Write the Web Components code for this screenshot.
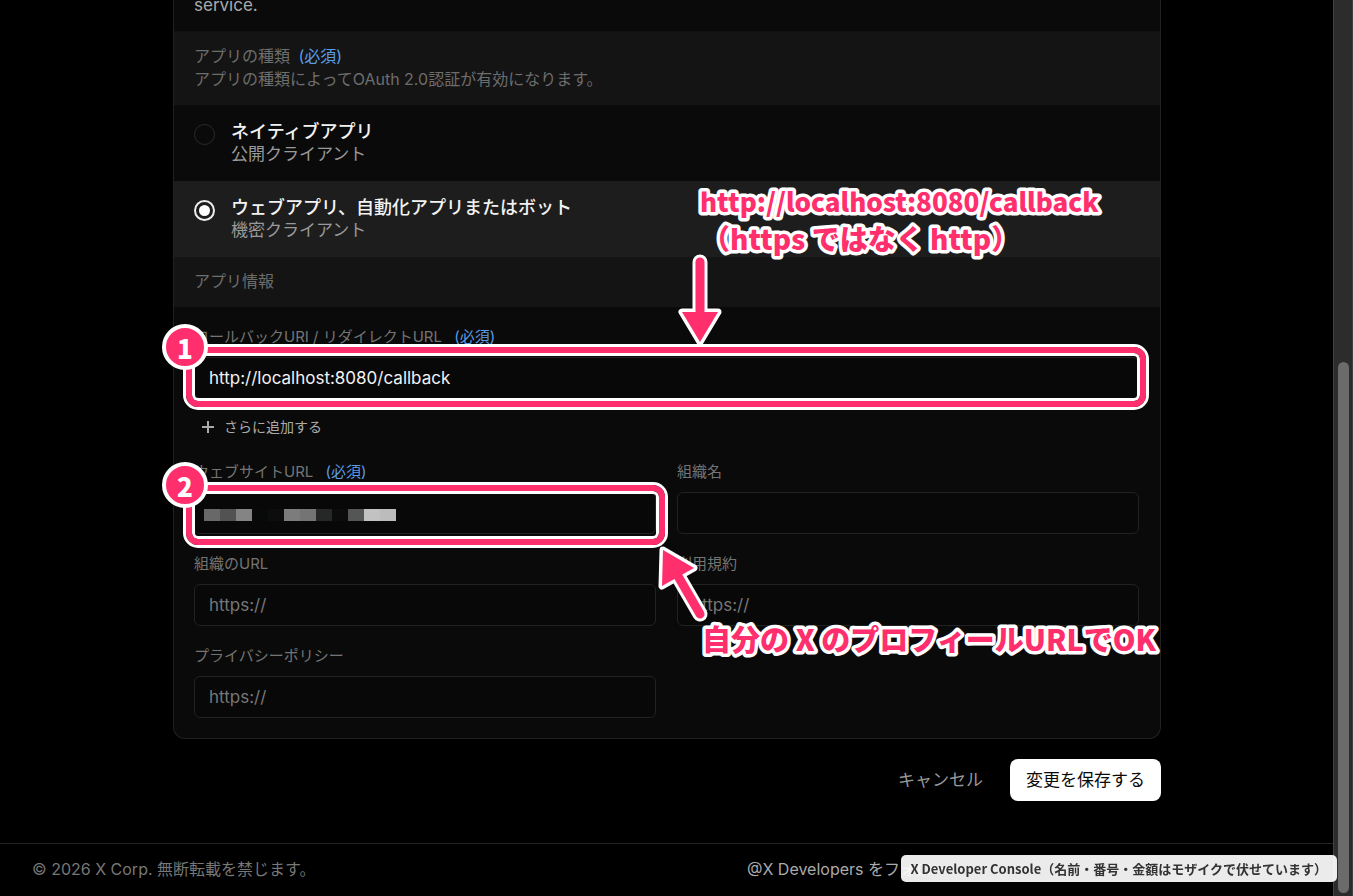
<!DOCTYPE html>
<html lang="ja">
<head>
<meta charset="utf-8">
<title>X Developer Console</title>
<style>
body { margin: 0; background: #000; }
</style>
</head>
<body>
<console-page></console-page>
<script>
const define = (name, html, setup) => {
  const tpl = document.createElement('template');
  tpl.innerHTML = html;
  customElements.define(name, class extends HTMLElement {
    constructor() {
      super();
      this.attachShadow({ mode: 'open' }).append(tpl.content.cloneNode(true));
    }
    connectedCallback() { if (setup) setup(this, this.shadowRoot); }
  });
};

/* Grey heading band inside the card */
define('section-band', `
<style>
:host { display: block; background: #141414; color: #6d6d6d; font-size: 16px; line-height: 23px; padding: 13px 20px 14px; }
</style>
<slot></slot>`);

define('required-mark', `
<style>
:host { color: #5c9ae2; margin-left: 8px; }
</style>
<slot></slot>`);

define('app-type-picker', `
<style>
:host { display: block; }
fieldset { border: 0; margin: 0; padding: 0; min-width: 0; }
label { display: flex; gap: 16px; padding: 15px 20px; }
label:has(:checked) { background: #1d1d1d; }
input { appearance: none; box-sizing: border-box; flex: none; width: 21px; height: 21px; margin: 4px 0 0; border: 1px solid #2b2b2b; border-radius: 50%; display: grid; place-items: center; }
input:checked { border: 2px solid #eee; }
input:checked::before { content: ""; width: 11px; height: 11px; border-radius: 50%; background: #fff; }
span { display: block; line-height: 23px; }
.name { color: #f2f2f2; font-size: 18px; font-weight: 500; }
.kind { color: #999; font-size: 17px; }
</style>
<fieldset aria-label="アプリの種類">
  <label><input type="radio" name="type"><span><span class="name">ネイティブアプリ</span><span class="kind">公開クライアント</span></span></label>
  <label><input type="radio" name="type" checked><span><span class="name">ウェブアプリ、自動化アプリまたはボット</span><span class="kind">機密クライアント</span></span></label>
</fieldset>`);

define('text-field', `
<style>
:host { display: block; min-width: 0; }
label { display: block; color: #747474; font-size: 15px; line-height: 20px; margin-bottom: 10px; white-space: nowrap; }
.box { position: relative; }
input { display: block; box-sizing: border-box; width: 100%; height: 42px; padding: 0 14px; border: 1px solid #222; border-radius: 6px; background: #080808; color: #f2f2f2; font: inherit; font-size: 17px; outline: 0; }
input::placeholder { color: #777; opacity: 1; }
</style>
<label for="f"><slot></slot></label>
<div class="box"><input id="f" type="text"><slot name="over"></slot></div>`,
(host, root) => {
  const input = root.getElementById('f');
  input.placeholder = host.getAttribute('placeholder') || '';
  input.value = host.getAttribute('value') || '';
});

/* Numbered pink frame laid over a field */
define('step-ring', `
<style>
:host { position: absolute; inset: -10px -7px -8px -8px; border: 6px solid #ff2e6c; border-radius: 12px; box-shadow: 0 0 0 3px #fff, inset 0 0 0 3px #fff; pointer-events: none; }
:host([low]) { inset: -7px -9px -11px -8px; }
span { position: absolute; left: -30px; top: -29px; box-sizing: border-box; width: 46px; height: 46px; border: 4px solid #fff; border-radius: 50%; background: #ff2e6c; color: #fff; font: 900 26px/40px "Noto Sans CJK JP", sans-serif; text-align: center; }
</style>
<span><slot></slot></span>`);

define('pixel-mask', `
<style>
:host { position: absolute; left: 10px; top: 17px; }
svg { display: block; }
</style>
<svg width="192" height="12" shape-rendering="crispEdges" aria-hidden="true"></svg>`,
(host, root) => {
  const tones = ['#686868', '#525252', '#848484', '#080a09', '#0d0d0d', '#7c7c7c', '#747474', '#262828', '#0c0c0c', '#545656', '#c2c2c2', '#bcbcbc'];
  root.querySelector('svg').innerHTML = tones.map((c, i) => `<rect x="${i * 16}" width="16" height="12" fill="${c}"/>`).join('');
});

define('add-button', `
<style>
:host { display: block; }
button { display: flex; align-items: center; gap: 10px; border: 0; background: none; padding: 0 8px; color: #aaa; font: inherit; font-size: 14px; line-height: 20px; }
</style>
<button type="button"><svg width="12" height="12" viewBox="0 0 12 12" stroke="currentColor" stroke-width="2" aria-hidden="true"><path d="M6 0v12M0 6h12"/></svg><slot></slot></button>`);

/* Pink handwriting-style remark with a rounded white outline */
define('outlined-note', `
<style>
:host { position: absolute; font-family: "Noto Sans CJK JP", sans-serif; font-weight: 900; }
svg { display: block; overflow: visible; }
text { fill: #ff2e6c; stroke: #fff; stroke-width: 7px; stroke-linejoin: round; paint-order: stroke; }
</style>
<svg width="10" height="38"><text x="0" y="29"></text></svg>`,
(host, root) => { root.querySelector('text').textContent = host.getAttribute('text'); });

define('note-arrow', `
<style>
:host { position: absolute; pointer-events: none; }
svg { display: block; overflow: visible; }
.halo { stroke: #fff; fill: #fff; stroke-linejoin: round; stroke-linecap: round; }
.ink { stroke: #ff2e6c; stroke-linecap: round; }
</style>
<svg aria-hidden="true"></svg>`,
(host, root) => {
  const svg = root.querySelector('svg');
  const up = host.hasAttribute('diagonal');
  const shaft = up ? 'M17 26L42 69' : 'M22 9V58';
  const head = up ? 'M5 5L36 23L4 41Z' : 'M4 59H40L22 89Z';
  svg.setAttribute('width', up ? 50 : 44);
  svg.setAttribute('height', up ? 78 : 94);
  svg.innerHTML = `<path class="halo" stroke-width="15" d="${shaft}"/><path class="halo" stroke-width="7" d="${head}"/><path class="ink" stroke-width="9" d="${shaft}"/><path fill="#ff2e6c" d="${head}"/>`;
});

define('form-actions', `
<style>
:host { display: flex; justify-content: flex-end; gap: 11px; padding: 20px 0 42px; }
button { border: 0; border-radius: 8px; height: 42px; padding: 0 16px 4px; font: inherit; font-size: 17px; background: none; color: #999; }
.save { background: #fff; color: #0a0a0a; }
</style>
<button type="button">キャンセル</button><button type="submit" class="save">変更を保存する</button>`);

define('page-footer', `
<style>
:host { display: flex; justify-content: space-between; border-top: 1px solid #222; padding: 14px 32px 15px; color: #777; font-size: 16px; line-height: 23px; }
nav { flex: 0 1 554px; }
a { color: #aaa; text-decoration: none; }
</style>
<span>© 2026 X Corp. 無断転載を禁じます。</span>
<nav><a href="#follow">@X Developers をフォロー</a></nav>`);

define('scroll-rail', `
<style>
:host { display: flex; flex-direction: column; box-sizing: border-box; width: 20px; padding: 0 3px 3px 4px; background: #2c2c2c; border-left: 1px solid #424242; border-right: 1px solid #424242; }
i { flex: 1; margin-top: 362px; border-radius: 6px; background: #6b6b6b; }
</style>
<i></i>`);

define('source-caption', `
<style>
:host { position: fixed; right: 16px; bottom: 14px; box-sizing: border-box; padding: 0 10px 0 9px; border-radius: 5px; background: rgba(255,255,255,.92); color: #333; font: 700 13px/27px "Noto Sans CJK JP", sans-serif; white-space: nowrap; }
</style>
<slot></slot>`);

define('console-page', `
<style>
:host { display: flex; min-height: 100vh; background: #000; font-family: Inter, "Noto Sans CJK JP", sans-serif; }
.page { flex: 1; min-width: 0; }
main { position: relative; padding: 0 172px 0 173px; }
.card { border: 1px solid #222; border-top: 0; border-radius: 0 0 12px 12px; background: #0a0a0a; }
.purpose { margin: 0; padding: 0 20px 21px; line-height: 10px; font-size: 17px; color: #aaa; border-bottom: 1px solid #111; }
section-band required-mark { margin-left: 4px; }
.fields { display: grid; grid-template-columns: 1fr 1fr; gap: 20px 21px; padding: 20px 21px 20px 20px; }
.wide { grid-column: 1 / -1; }
add-button { margin: -2px 0 5px; }
.url-note { left: 700px; top: 183px; font-size: 26px; }
.scheme-note { left: 702px; top: 221px; font-size: 28px; }
.profile-note { left: 702px; top: 622px; font-size: 29px; }
.down { left: 678px; top: 253px; }
.up { left: 658px; top: 545px; }
</style>
<div class="page">
  <main>
    <form>
      <div class="card">
        <p class="purpose">service.</p>
        <section-band>アプリの種類<required-mark>(必須)</required-mark><br>アプリの種類によってOAuth 2.0認証が有効になります。</section-band>
        <app-type-picker></app-type-picker>
        <section-band>アプリ情報</section-band>
        <div class="fields">
          <text-field class="wide" value="http://localhost:8080/callback">コールバックURI / リダイレクトURL<required-mark>(必須)</required-mark><step-ring slot="over">1</step-ring></text-field>
          <add-button class="wide">さらに追加する</add-button>
          <text-field>ウェブサイトURL<required-mark>(必須)</required-mark><pixel-mask slot="over"></pixel-mask><step-ring slot="over" low>2</step-ring></text-field>
          <text-field>組織名</text-field>
          <text-field placeholder="https://">組織のURL</text-field>
          <text-field placeholder="https://">利用規約</text-field>
          <text-field placeholder="https://">プライバシーポリシー</text-field>
        </div>
      </div>
      <form-actions></form-actions>
    </form>
    <note-arrow class="down"></note-arrow>
    <note-arrow class="up" diagonal></note-arrow>
    <outlined-note class="url-note" text="http://localhost:8080/callback"></outlined-note>
    <outlined-note class="scheme-note" text="（https ではなく http）"></outlined-note>
    <outlined-note class="profile-note" text="自分の X のプロフィールURLでOK"></outlined-note>
  </main>
  <page-footer></page-footer>
</div>
<scroll-rail></scroll-rail>
<source-caption>X Developer Console（名前・番号・金額はモザイクで伏せています）</source-caption>`);
</script>
</body>
</html>
